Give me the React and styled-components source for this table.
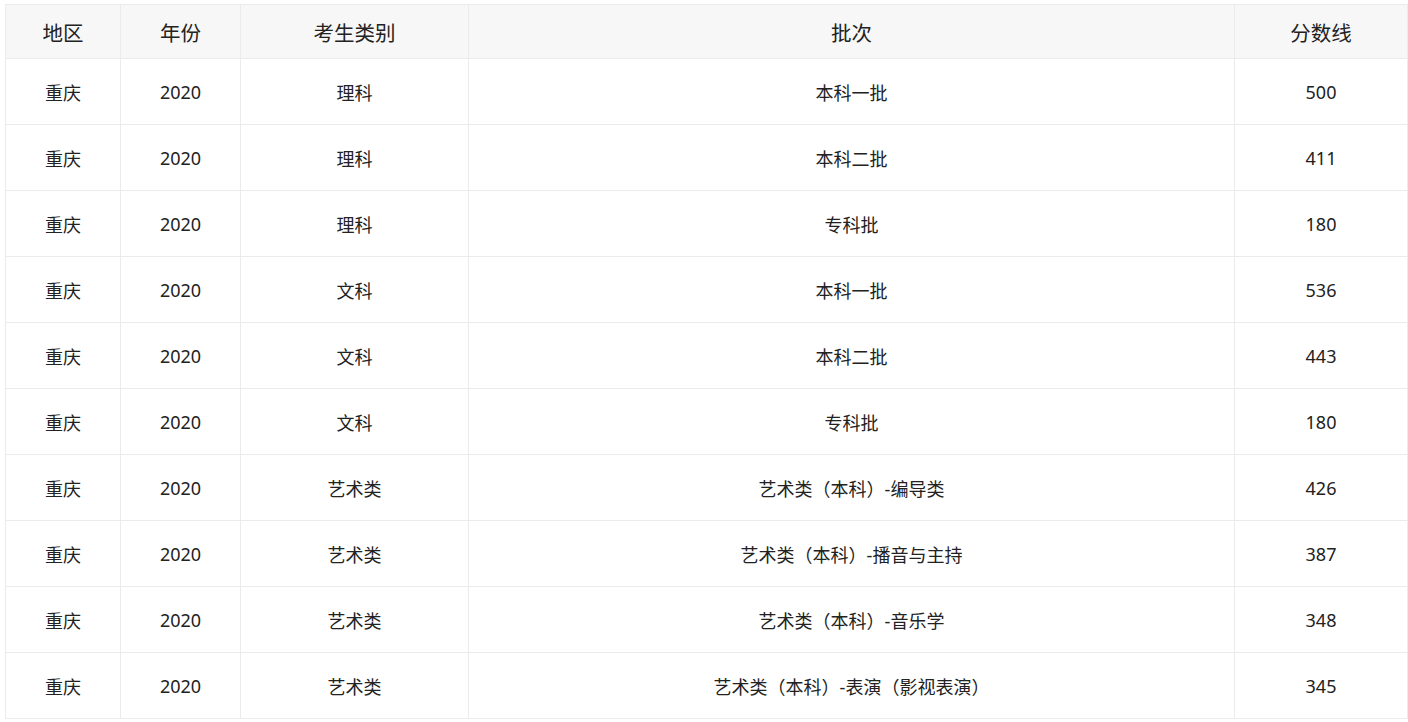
import React from "react";
import styled, { createGlobalStyle } from "styled-components";

const GlobalStyle = createGlobalStyle`
  body {
    margin: 0;
    background: #fff;
    font-family: "Noto Sans", "Noto Sans CJK SC", sans-serif;
    color: #222;
  }
`;

const Page = styled.div`
  padding: 4px 0 0 5px;
`;

const Table = styled.table`
  border-collapse: collapse;
  table-layout: fixed;
  width: 1403px;
`;

const HeadCell = styled.th`
  width: ${({ w }) => w}px;
  height: 53px;
  padding: 0;
  background: #f7f7f7;
  border: 1px solid #ebebeb;
  font-size: 20.5px;
  font-weight: normal;
  text-align: center;
  vertical-align: middle;
`;

const Cell = styled.td`
  height: 65px;
  padding: 0;
  border: 1px solid #ebebeb;
  font-size: 18px;
  text-align: center;
  vertical-align: middle;
`;

const columns = [
  { title: "地区", w: 114 },
  { title: "年份", w: 119 },
  { title: "考生类别", w: 227 },
  { title: "批次", w: 765 },
  { title: "分数线", w: 172 },
];

const rows = [
  ["理科", "本科一批", "500"],
  ["理科", "本科二批", "411"],
  ["理科", "专科批", "180"],
  ["文科", "本科一批", "536"],
  ["文科", "本科二批", "443"],
  ["文科", "专科批", "180"],
  ["艺术类", "艺术类（本科）-编导类", "426"],
  ["艺术类", "艺术类（本科）-播音与主持", "387"],
  ["艺术类", "艺术类（本科）-音乐学", "348"],
  ["艺术类", "艺术类（本科）-表演（影视表演）", "345"],
];

export default function App() {
  return (
    <Page>
      <GlobalStyle />
      <Table>
        <thead>
          <tr>
            {columns.map((c) => (
              <HeadCell key={c.title} w={c.w}>
                {c.title}
              </HeadCell>
            ))}
          </tr>
        </thead>
        <tbody>
          {rows.map(([type, batch, score], i) => (
            <tr key={i}>
              <Cell>重庆</Cell>
              <Cell>2020</Cell>
              <Cell>{type}</Cell>
              <Cell>{batch}</Cell>
              <Cell>{score}</Cell>
            </tr>
          ))}
        </tbody>
      </Table>
    </Page>
  );
}
